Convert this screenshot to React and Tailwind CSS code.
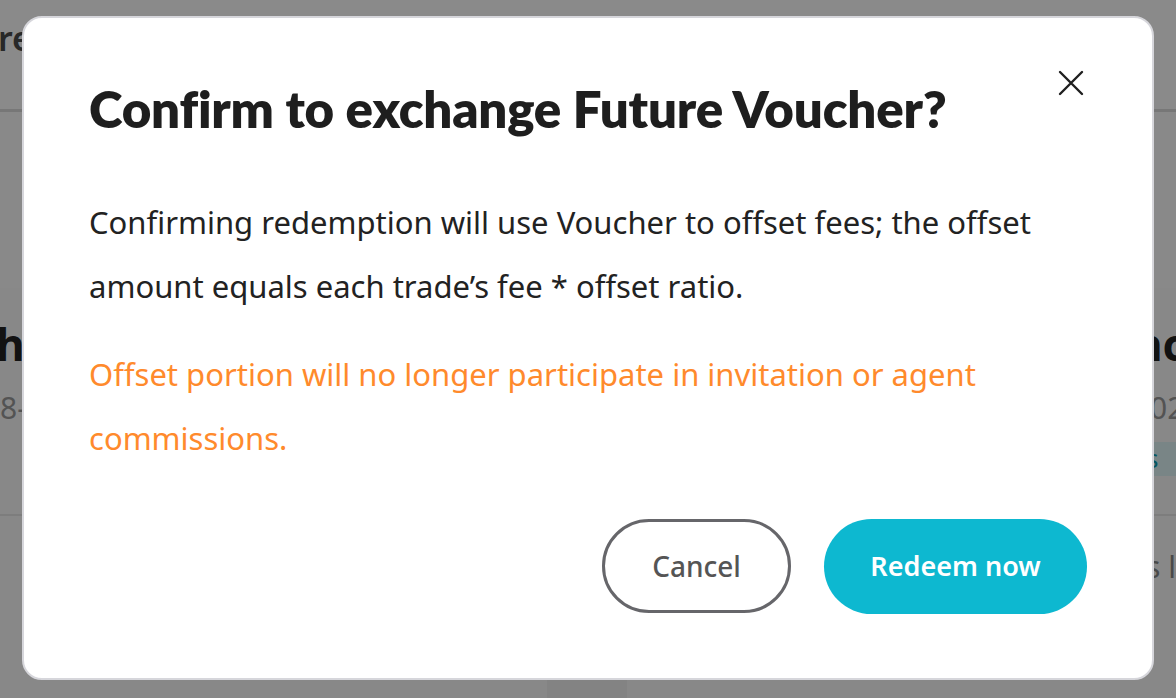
import React from "react";

function CloseIcon() {
  return (
    <svg width="26" height="26" viewBox="0 0 26 26" fill="none">
      <path d="M2 2L24 24M24 2L2 24" stroke="#1f1f1f" strokeWidth="2.4" strokeLinecap="round" />
    </svg>
  );
}

export default function App() {
  return (
    <div
      className="relative w-[1176px] h-[698px] overflow-hidden bg-[#f2f2f2]"
      style={{ fontFamily: "'Noto Sans', 'Open Sans', Arial, sans-serif" }}
    >
      {/* underlying page */}
      <div className="flex flex-col h-full">
        <header className="h-[112px] shrink-0 bg-white border-b-[3px] border-[#dcdcdc] flex items-start pt-[16px]">
          <span className="text-[34px] font-semibold text-[#4a4a4a] -ml-[2px] leading-[44px]">re</span>
        </header>
        <div className="h-[176px] shrink-0 bg-[#fdfdfd]" />
        <div className="flex-1 flex gap-[80px] bg-[#f2f2f2]">
          <div className="w-[547px] flex flex-col bg-[#fcfcfc]">
            <div className="h-[228px] pt-[30px] flex flex-col gap-[18px] border-b-2 border-[#e8e8e8]">
              <span className="text-[44px] font-bold text-[#222] leading-[52px] -ml-[4px]">h</span>
              <span className="text-[30px] text-[#9a9a9a] leading-[40px]">8-</span>
            </div>
          </div>
          <div className="flex-1 flex justify-end bg-[#fcfcfc]">
            <div className="w-[22px] overflow-visible flex flex-col">
              <div className="h-[228px] pt-[30px] flex flex-col border-b-2 border-[#e8e8e8] w-[22px]">
                <span className="text-[44px] font-bold text-[#222] leading-[52px] whitespace-nowrap -ml-[20px]">nc</span>
                <span className="text-[30px] text-[#9a9a9a] leading-[40px] mt-[18px] whitespace-nowrap -ml-[4px]">02</span>
                <span className="mt-[14px] h-[34px] w-[40px] rounded-l-[8px] bg-[#dff5f8] text-[#0a9fb5] text-[26px] leading-[32px] pl-[4px] -ml-[12px]">s</span>
              </div>
              <span className="mt-[28px] text-[30px] text-[#888] whitespace-nowrap -ml-[8px]">s l</span>
            </div>
          </div>
        </div>
      </div>

      {/* overlay */}
      <div className="absolute inset-0 bg-black/[0.46]" />

      {/* modal */}
      <div className="absolute left-[22px] top-[16px] w-[1132px] h-[664px] bg-white rounded-[20px] border-2 border-[#d6d6db] flex flex-col px-[65px] pt-[61px]">
        <button className="absolute right-[68px] top-[52px] w-[26px] h-[26px] flex items-center justify-center">
          <CloseIcon />
        </button>
        <h2
          className="text-[51px] font-extrabold text-[#1e1e1e] leading-[60px] tracking-[-0.2px]"
          style={{ fontFamily: "Lato, 'Noto Sans', sans-serif" }}
        >
          Confirm to exchange Future Voucher?
        </h2>
        <p className="mt-[51px] text-[31px] text-[#222] leading-[64px]">
          Confirming redemption will use Voucher to offset fees; the offset amount equals each trade’s fee * offset ratio.
        </p>
        <p className="mt-[24px] text-[31px] text-[#ff8a2c] leading-[64px]">
          Offset portion will no longer participate in invitation or agent commissions.
        </p>
        <div className="mt-auto mb-[64px] flex justify-end gap-[33px]">
          <button className="w-[189px] h-[94px] rounded-full border-[3px] border-[#66666a] text-[28px] font-medium text-[#555] bg-white">
            Cancel
          </button>
          <button className="w-[263px] h-[95px] rounded-full bg-[#0db8d0] text-[27px] font-semibold text-white">
            Redeem now
          </button>
        </div>
      </div>
    </div>
  );
}
